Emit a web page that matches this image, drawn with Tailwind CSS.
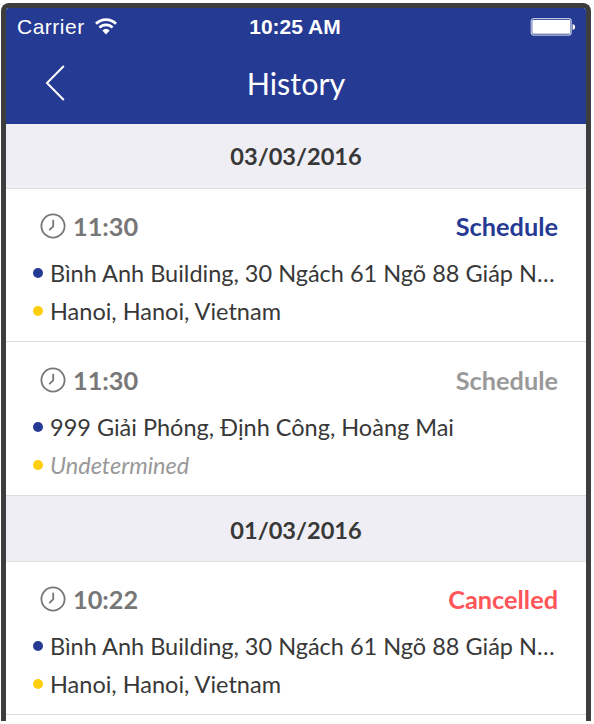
<!DOCTYPE html>
<html lang="vi"><head><meta charset="utf-8"><title>History</title>
<script src="https://cdn.jsdelivr.net/npm/@tailwindcss/browser@4"></script></head>
<body class="w-[594px] h-[724px] overflow-hidden bg-white font-[Lato,'Noto_Sans',sans-serif] text-[#383838]">
<svg class="hidden"><symbol id="clock" viewBox="0 0 26 26"><g fill="none" stroke="#777" stroke-width="1.8"><circle cx="13" cy="13" r="11.6"/><path d="M13.2 6.8V13.3L9.2 17.2"/></g></symbol></svg>
<div class="pl-px pt-[3px] h-[721px] overflow-hidden"><div class="w-[590px] h-[718px] overflow-hidden border-[5px] border-b-0 border-[#3d3d3d] rounded-t-[8px] bg-white">
<header class="h-[116px] bg-[#253a93] text-white">
<div class="grid grid-cols-3 h-[38px] items-center pl-[11px] pr-[10px] font-['Liberation_Sans',sans-serif] text-[21px]">
<div class="flex items-center gap-[10px]"><span class="tracking-[0.5px]">Carrier</span>
<svg class="w-[22px] h-[17px] -mt-px" viewBox="0 0 22 17"><g fill="none" stroke="#fff" stroke-width="2.7"><path d="M1 5.8C6.5.2 15.5.2 21 5.8"/><path d="M4.5 9.6C8 6 14 6 17.5 9.6"/></g><path d="M11 16.5 7.3 12.4Q11 9.2 14.7 12.4Z" fill="#fff"/></svg></div>
<span class="text-center font-bold text-[21px] -ml-[3px]">10:25 AM</span>
<svg class="justify-self-end w-[46px] h-[18px]" viewBox="0 0 46 18"><rect x="1.2" y=".7" width="40" height="16.4" rx="2.5" fill="none" stroke="#bdc4e0" stroke-width="1.2"/><rect x="2.3" y="2" width="38" height="13.8" rx="1" fill="#fff"/><path d="M42.6 6q2.6.4 2.6 3t-2.6 3Z" fill="#fff"/></svg>
</div>
<div class="grid grid-cols-3 h-[78px] items-center pl-[38px] pr-[38px] pb-[4px]">
<svg class="w-[22px] h-[36px]" viewBox="0 0 22 36"><path d="M19.8 1 3 18 19.8 35" fill="none" stroke="#fff" stroke-width="2"/></svg>
<h1 class="text-center text-[30.5px] pt-px">History</h1>
</div></header>
<main>
<h2 class="h-[65px] flex items-center justify-center bg-[#efeef4] border-b border-[#dededf] font-bold text-[23.6px] pt-[2px]">03/03/2016</h2>
<section class="h-[153px] border-b border-[#dededf] pt-[17px] pl-[27px] pr-[28px]">
<div class="flex items-center h-[40px] pl-[7px] text-[25.3px] font-bold"><svg class="size-[26px] mr-[7px]"><use href="#clock"/></svg><span class="mt-[2px] text-[#777]">11:30</span><span class="mt-[2px] ml-auto text-[#253a93]">Schedule</span></div>
<p class="flex items-center h-[56px] text-[23.5px]"><i class="size-[10px] rounded-full bg-[#253a93] mr-[7px] -mt-[2px] shrink-0"></i><span class="whitespace-nowrap">Bình Anh Building, 30 Ngách 61 Ngõ 88 Giáp N…</span></p>
<p class="flex items-center h-[20px] text-[23.5px]"><i class="size-[10px] rounded-full bg-[#ffce0d] mr-[7px] -mt-[2px]"></i><span>Hanoi, Hanoi, Vietnam</span></p>
</section>
<section class="h-[154px] border-b border-[#dededf] pt-[18px] pl-[27px] pr-[28px]">
<div class="flex items-center h-[40px] pl-[7px] text-[25.3px] font-bold"><svg class="size-[26px] mr-[7px]"><use href="#clock"/></svg><span class="mt-[2px] text-[#777]">11:30</span><span class="mt-[2px] ml-auto text-[#999]">Schedule</span></div>
<p class="flex items-center h-[56px] text-[23.5px]"><i class="size-[10px] rounded-full bg-[#253a93] mr-[7px] -mt-[2px]"></i><span class="whitespace-nowrap">999 Giải Phóng, Định Công, Hoàng Mai</span></p>
<p class="flex items-center h-[20px] text-[23.5px] text-[#999]"><i class="size-[10px] rounded-full bg-[#ffce0d] mr-[7px] -mt-[2px]"></i><span class="italic">Undetermined</span></p>
</section>
<h2 class="h-[66px] flex items-center justify-center bg-[#efeef4] border-b border-[#dededf] font-bold text-[23.6px] pt-[4px]">01/03/2016</h2>
<section class="h-[153px] border-b border-[#dededf] pt-[17px] pl-[27px] pr-[28px]">
<div class="flex items-center h-[40px] pl-[7px] text-[25.3px] font-bold"><svg class="size-[26px] mr-[7px]"><use href="#clock"/></svg><span class="mt-[2px] text-[#777]">10:22</span><span class="mt-[2px] ml-auto text-[#ff5558]">Cancelled</span></div>
<p class="flex items-center h-[56px] text-[23.5px]"><i class="size-[10px] rounded-full bg-[#253a93] mr-[7px] -mt-[2px] shrink-0"></i><span class="whitespace-nowrap">Bình Anh Building, 30 Ngách 61 Ngõ 88 Giáp N…</span></p>
<p class="flex items-center h-[20px] text-[23.5px]"><i class="size-[10px] rounded-full bg-[#ffce0d] mr-[7px] -mt-[2px]"></i><span>Hanoi, Hanoi, Vietnam</span></p>
</section>
</main></div></div></body></html>
